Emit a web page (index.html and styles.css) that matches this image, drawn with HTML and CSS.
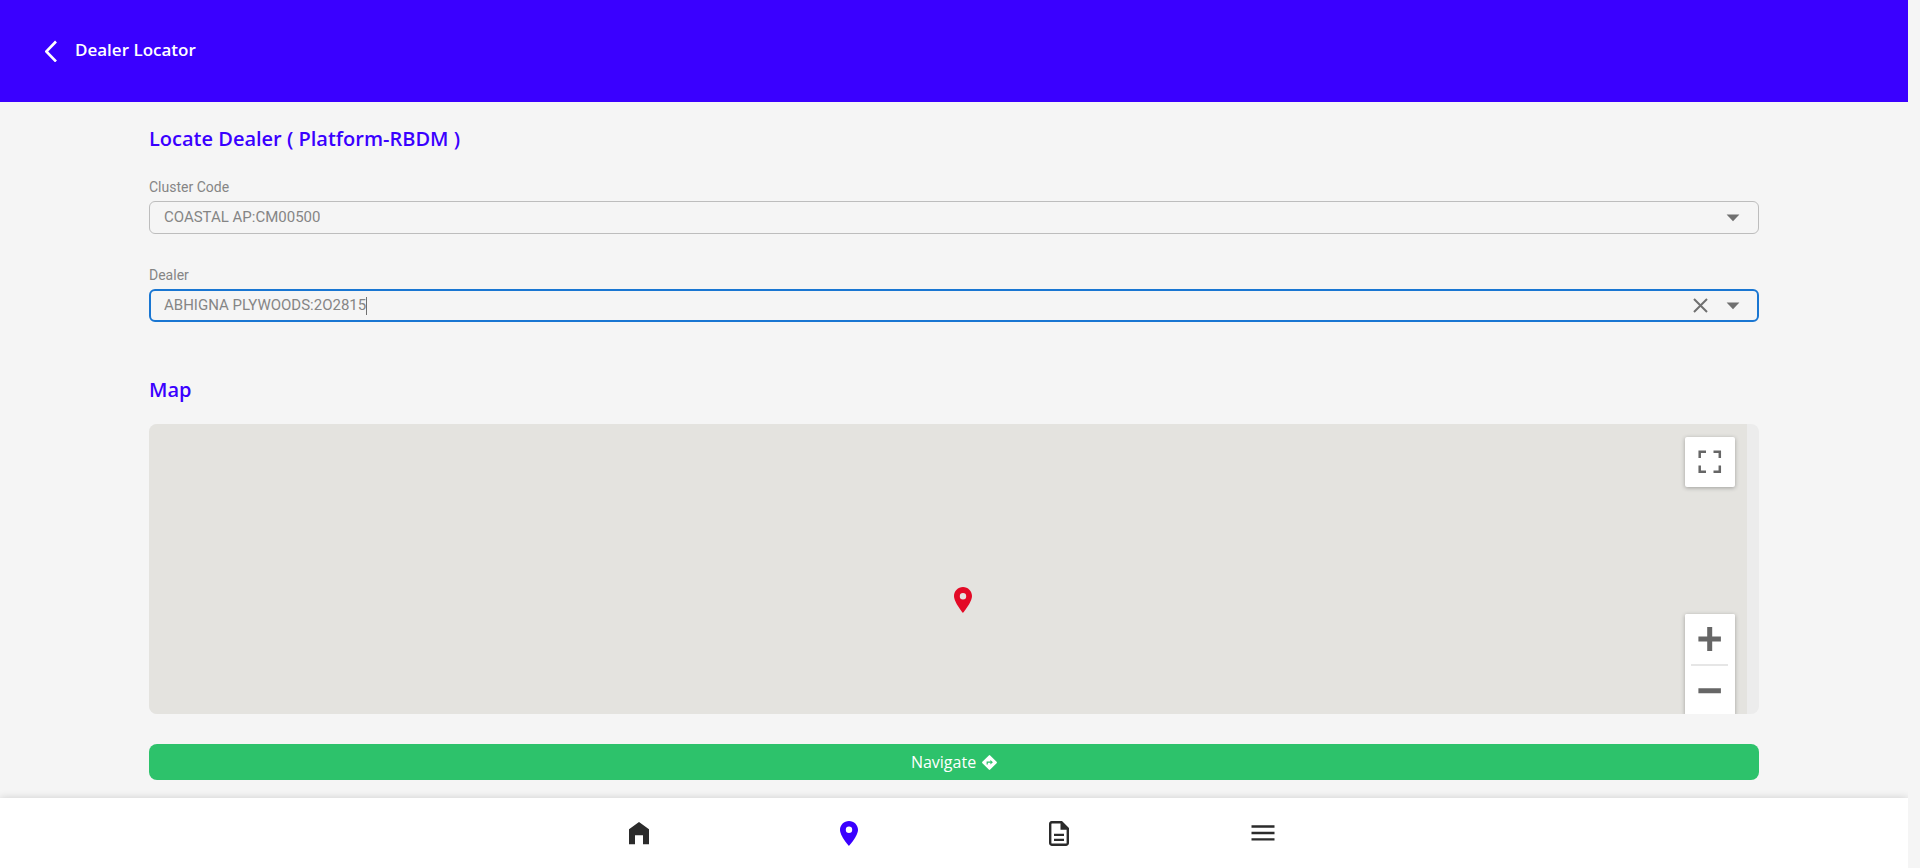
FILE: index.html
```html
<!DOCTYPE html>
<html lang="en">
<head>
<meta charset="utf-8">
<title>Dealer Locator</title>
<meta name="viewport" content="width=device-width, initial-scale=1">
<link rel="stylesheet" href="styles.css">
</head>
<body>
<div class="page">
  <header class="header">
    <button class="icon-btn" type="button" aria-label="Back">
      <svg width="12" height="22" viewBox="0 0 12 22"><path d="M11 1.500 1.300 11.500 11 21.500" fill="none" stroke="#fff" stroke-width="2.600"/></svg>
    </button>
    <h1 class="header-title">Dealer Locator</h1>
  </header>

  <main class="content">
    <h2 class="heading">Locate Dealer ( Platform-RBDM )</h2>

    <div class="field">
      <label class="label" for="cluster">Cluster Code</label>
      <div class="combo">
        <input class="combo-input" id="cluster" type="text" value="COASTAL AP:CM00500">
        <div class="combo-actions">
          <button class="icon-btn" type="button" aria-label="Open cluster list">
            <svg width="14" height="8" viewBox="0 0 14 8"><path d="M.6.6h12.8L7 7.2z" fill="#707070"/></svg>
          </button>
        </div>
      </div>
    </div>

    <div class="field">
      <label class="label" for="dealer">Dealer</label>
      <div class="combo combo-active">
        <input class="combo-input" id="dealer" type="text" value="ABHIGNA PLYWOODS:2O2815">
        <span class="caret"></span>
        <div class="combo-actions">
          <button class="icon-btn" type="button" aria-label="Clear">
            <svg width="15" height="15" viewBox="0 0 15 15"><path d="M1 1l13 13M14 1 1 14" stroke="#707070" stroke-width="2"/></svg>
          </button>
          <button class="icon-btn" type="button" aria-label="Open dealer list">
            <svg width="14" height="8" viewBox="0 0 14 8"><path d="M.6.6h12.8L7 7.2z" fill="#707070"/></svg>
          </button>
        </div>
      </div>
    </div>

    <h2 class="heading heading-map">Map</h2>
    <section class="map" aria-label="Map">
      <div class="map-canvas">
        <svg class="map-pin" width="18" height="26" viewBox="0 0 18 26"><path d="M9 0C4 0 0 4 0 9.1 0 15.500 9 26 9 26s9-10.500 9-16.900C18 4 14 0 9 0zm0 12.400A3.200 3.200 0 1 1 9 6a3.200 3.200 0 0 1 0 6.400z" fill="#e30a26"/></svg>
        <button class="map-btn map-full" type="button" aria-label="Toggle fullscreen">
          <svg width="24" height="24" viewBox="0 0 24 24"><path d="M1.700 8V1.700H8M15.500 1.700h6.300V8M21.800 15.500v6.300h-6.300M8 21.800H1.700v-6.300" fill="none" stroke="#666" stroke-width="2.500"/></svg>
        </button>
        <div class="map-zoom">
          <button class="map-btn" type="button" aria-label="Zoom in">
            <svg width="24" height="24" viewBox="0 0 24 24"><path d="M9.200 0h5v9.500h8.700v5h-8.700V24h-5v-9.500H.4v-5h8.800z" fill="#666"/></svg>
          </button>
          <div class="map-rule"></div>
          <button class="map-btn" type="button" aria-label="Zoom out">
            <svg width="24" height="6" viewBox="0 0 24 6"><path d="M.4.200h22.500v5H.4z" fill="#666"/></svg>
          </button>
        </div>
      </div>
    </section>

    <button class="navigate" type="button">
      <span>Navigate</span>
      <svg width="15" height="15" viewBox="0 0 15 15"><path d="M7.500.1a1 1 0 0 1 .7.3l6.400 6.400a1 1 0 0 1 0 1.400l-6.400 6.400a1 1 0 0 1-1.400 0L.4 8.200a1 1 0 0 1 0-1.400L6.800.4a1 1 0 0 1 .7-.3z" fill="#fff"/><path d="M5.200 9.600V7.200h3.600" fill="none" stroke="#2dc26b" stroke-width="1.200"/><path d="M8.400 4.900l2.500 2.300-2.500 2.300z" fill="#2dc26b"/></svg>
    </button>
  </main>

  <nav class="tabs" aria-label="Main">
    <a class="tab" href="#home" aria-label="Home"><svg width="20" height="23" viewBox="0 0 20 23"><path d="M10 0 20 7.300V22.300h-6v-9H6v9H0v-15z" fill="#2b2b2b"/></svg></a>
    <a class="tab" href="#locator" aria-label="Dealer locator"><svg width="18" height="25" viewBox="0 0 18 25"><path d="M9 0C4 0 0 4 0 8.800 0 15.200 9 25 9 25s9-9.800 9-16.200C18 4 14 0 9 0zm0 12A3.200 3.200 0 1 1 9 5.600 3.200 3.200 0 0 1 9 12z" fill="#3a00ff"/></svg></a>
    <a class="tab" href="#documents" aria-label="Documents"><svg width="20" height="25" viewBox="0 0 20 25"><path d="M2.800 1.200h9.700l6.300 6.300V22a1.800 1.800 0 0 1-1.800 1.800H3A1.800 1.800 0 0 1 1.200 22V3a1.800 1.800 0 0 1 1.600-1.800z" fill="none" stroke="#2b2b2b" stroke-width="2.400"/><path d="M11.500 1H13l6 6v1.800h-7.500zM5 12.700h10v2.300H5zM5 17.700h10V20H5z" fill="#2b2b2b"/></svg></a>
    <a class="tab tab-menu" href="#menu" aria-label="Menu"><svg width="24" height="16" viewBox="0 0 24 16"><path d="M.5 1.500h23M.5 8h23M.5 14.300h23" stroke="#2b2b2b" stroke-width="2.300"/></svg></a>
  </nav>
</div>
</body>
</html>
```
FILE: styles.css
```css
* {
  box-sizing: border-box;
}

body {
  margin: 0;
  padding-right: 12px;
  background: #f5f5f5;
  color: #858585;
  font-family: Roboto, sans-serif;
}

svg {
  display: block;
}

.page {
  display: flex;
  flex-direction: column;
  min-height: 100vh;
}

.icon-btn {
  padding: 0;
  border: 0;
  background: none;
  cursor: pointer;
}

.header {
  display: flex;
  align-items: center;
  gap: 18px;
  height: 102px;
  padding-left: 45px;
  background: #3a00ff;
}

.header-title {
  margin: 0 0 2px;
  color: #fff;
  font: 600 17px/24px "Open Sans", sans-serif;
}

.content {
  display: flex;
  flex-direction: column;
  padding: 23px 149px 18px;
}

.heading {
  margin: 0 0 25px;
  color: #3a00ff;
  font: 600 20px/28px "Open Sans", sans-serif;
}

.field {
  margin-bottom: 32px;
}

.label {
  display: block;
  margin-bottom: 5px;
  font-size: 14px;
  line-height: 18px;
}

.combo {
  display: flex;
  align-items: center;
  height: 33px;
  padding: 0 18px 0 14px;
  border: 1px solid #bdbdbd;
  border-radius: 6px;
}

.combo-active {
  padding: 0 17px 0 13px;
  border: 2px solid #1976d2;
}

.combo-input {
  field-sizing: content;
  padding: 0 0 2px;
  border: 0;
  outline: 0;
  background: none;
  color: #858585;
  font: 15px/18px Roboto, sans-serif;
}

.caret {
  width: 1px;
  height: 18px;
  background: #707070;
}

.combo-actions {
  display: flex;
  align-items: center;
  gap: 18px;
  margin-left: auto;
}

.heading-map {
  margin: 22px 0 20px;
}

.map {
  height: 290px;
  padding-right: 12px;
  overflow: hidden;
  border-radius: 8px;
  background: #ececec;
}

.map-canvas {
  position: relative;
  height: 100%;
  background: #e4e3df;
}

.map-pin {
  position: absolute;
  top: 163px;
  left: calc(50% + 6px);
}

.map-btn {
  display: flex;
  align-items: center;
  justify-content: center;
  width: 50px;
  height: 50px;
  padding: 0;
  border: 0;
  border-radius: 2px;
  background: #fff;
}

.map-full {
  position: absolute;
  top: 13px;
  right: 12px;
  box-shadow: 0 1px 4px rgba(0, 0, 0, 0.3);
}

.map-zoom {
  position: absolute;
  top: 190px;
  right: 12px;
  border-radius: 2px;
  background: #fff;
  box-shadow: 0 1px 4px rgba(0, 0, 0, 0.3);
}

.map-rule {
  height: 2px;
  margin: 0 7px 0 6px;
  background: #e6e6e6;
}

.navigate {
  display: flex;
  align-items: center;
  justify-content: center;
  gap: 6px;
  height: 36px;
  margin-top: 30px;
  padding: 0;
  border: 0;
  border-radius: 8px;
  background: #2dc26b;
  color: #fff;
  font: 16px/20px "Open Sans", sans-serif;
}

.tabs {
  display: flex;
  justify-content: center;
  height: 70px;
  margin-top: auto;
  background: #fff;
  box-shadow: 0 0 8px rgba(0, 0, 0, 0.16);
  clip-path: inset(-12px 0 0 0);
}

.tab {
  display: flex;
  align-items: center;
  justify-content: center;
  width: 210px;
}

.tab-menu {
  padding-right: 12px;
}
```
